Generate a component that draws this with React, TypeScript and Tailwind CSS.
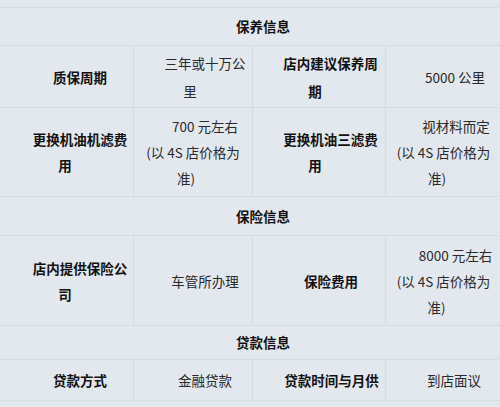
import React from "react";

type Line = { t: string; c: string };

const font = { fontFamily: '"Noto Sans CJK SC", "Noto Sans", sans-serif' };

function Cell({ lines, bold, tall }: { lines: Line[]; bold?: boolean; tall?: boolean }) {
  return (
    <div
      className={
        "bg-[#e3e8ef] flex flex-col justify-center text-[13.5px] whitespace-nowrap " +
        (tall ? "leading-[28px] " : "leading-[26px] ") +
        (bold ? "font-bold text-[#111]" : "text-[#2a2a2a]")
      }
    >
      {lines.map((l, i) => (
        <div key={i} className={"text-center " + l.c}>
          {l.t}
        </div>
      ))}
    </div>
  );
}

function Header({ t }: { t: string }) {
  return (
    <div className="col-span-4 bg-[#e3e8ef] flex items-center justify-center pl-[26px] text-[13.5px] font-bold text-[#111]">
      {t}
    </div>
  );
}

export default function App() {
  return (
    <div
      className="w-[500px] h-[407px] bg-[#d5dbe3] grid grid-cols-[133px_118px_132px_114px] grid-rows-[7px_37px_61px_88px_38px_89px_33px_40px_6px] gap-px overflow-hidden"
      style={font}
    >
      <div className="col-span-4 bg-[#e3e8ef]" />
      <Header t="保养信息" />

      {/* row 1 */}
      <Cell bold lines={[{ t: "质保周期", c: "pl-[27px]" }]} />
      <Cell
        tall
        lines={[
          { t: "三年或十万公", c: "pl-[24px]" },
          { t: "里", c: "pr-[6px]" },
        ]}
      />
      <Cell
        bold
        tall
        lines={[
          { t: "店内建议保养周", c: "pl-[23px]" },
          { t: "期", c: "pr-[8px]" },
        ]}
      />
      <Cell lines={[{ t: "5000 公里", c: "pl-[24px]" }]} />

      {/* row 2 */}
      <Cell
        bold
        lines={[
          { t: "更换机油机滤费", c: "pl-[27px]" },
          { t: "用", c: "pl-[27px] pr-[30px]" },
        ]}
      />
      <Cell
        lines={[
          { t: "700 元左右", c: "pl-[24px]" },
          { t: "(以 4S 店价格为", c: "" },
          { t: "准)", c: "pr-[14px]" },
        ]}
      />
      <Cell
        bold
        lines={[
          { t: "更换机油三滤费", c: "pl-[23px]" },
          { t: "用", c: "pr-[8px]" },
        ]}
      />
      <Cell
        lines={[
          { t: "视材料而定", c: "pl-[26px]" },
          { t: "(以 4S 店价格为", c: "pl-[1px]" },
          { t: "准)", c: "pr-[12px]" },
        ]}
      />

      <Header t="保险信息" />

      {/* row 3 */}
      <Cell
        bold
        lines={[
          { t: "店内提供保险公", c: "pl-[27px]" },
          { t: "司", c: "pl-[27px] pr-[30px]" },
        ]}
      />
      <Cell lines={[{ t: "车管所办理", c: "pl-[24px]" }]} />
      <Cell bold lines={[{ t: "保险费用", c: "pl-[24px]" }]} />
      <Cell
        lines={[
          { t: "8000 元左右", c: "pl-[25px]" },
          { t: "(以 4S 店价格为", c: "pl-[1px]" },
          { t: "准)", c: "pr-[13px]" },
        ]}
      />

      <Header t="贷款信息" />

      {/* row 4 */}
      <Cell bold lines={[{ t: "贷款方式", c: "pl-[27px]" }]} />
      <Cell lines={[{ t: "金融贷款", c: "pl-[24px]" }]} />
      <Cell bold lines={[{ t: "贷款时间与月供", c: "pl-[25px]" }]} />
      <Cell lines={[{ t: "到店面议", c: "pl-[22px]" }]} />

      <div className="col-span-4 bg-[#e3e8ef]" />
    </div>
  );
}
